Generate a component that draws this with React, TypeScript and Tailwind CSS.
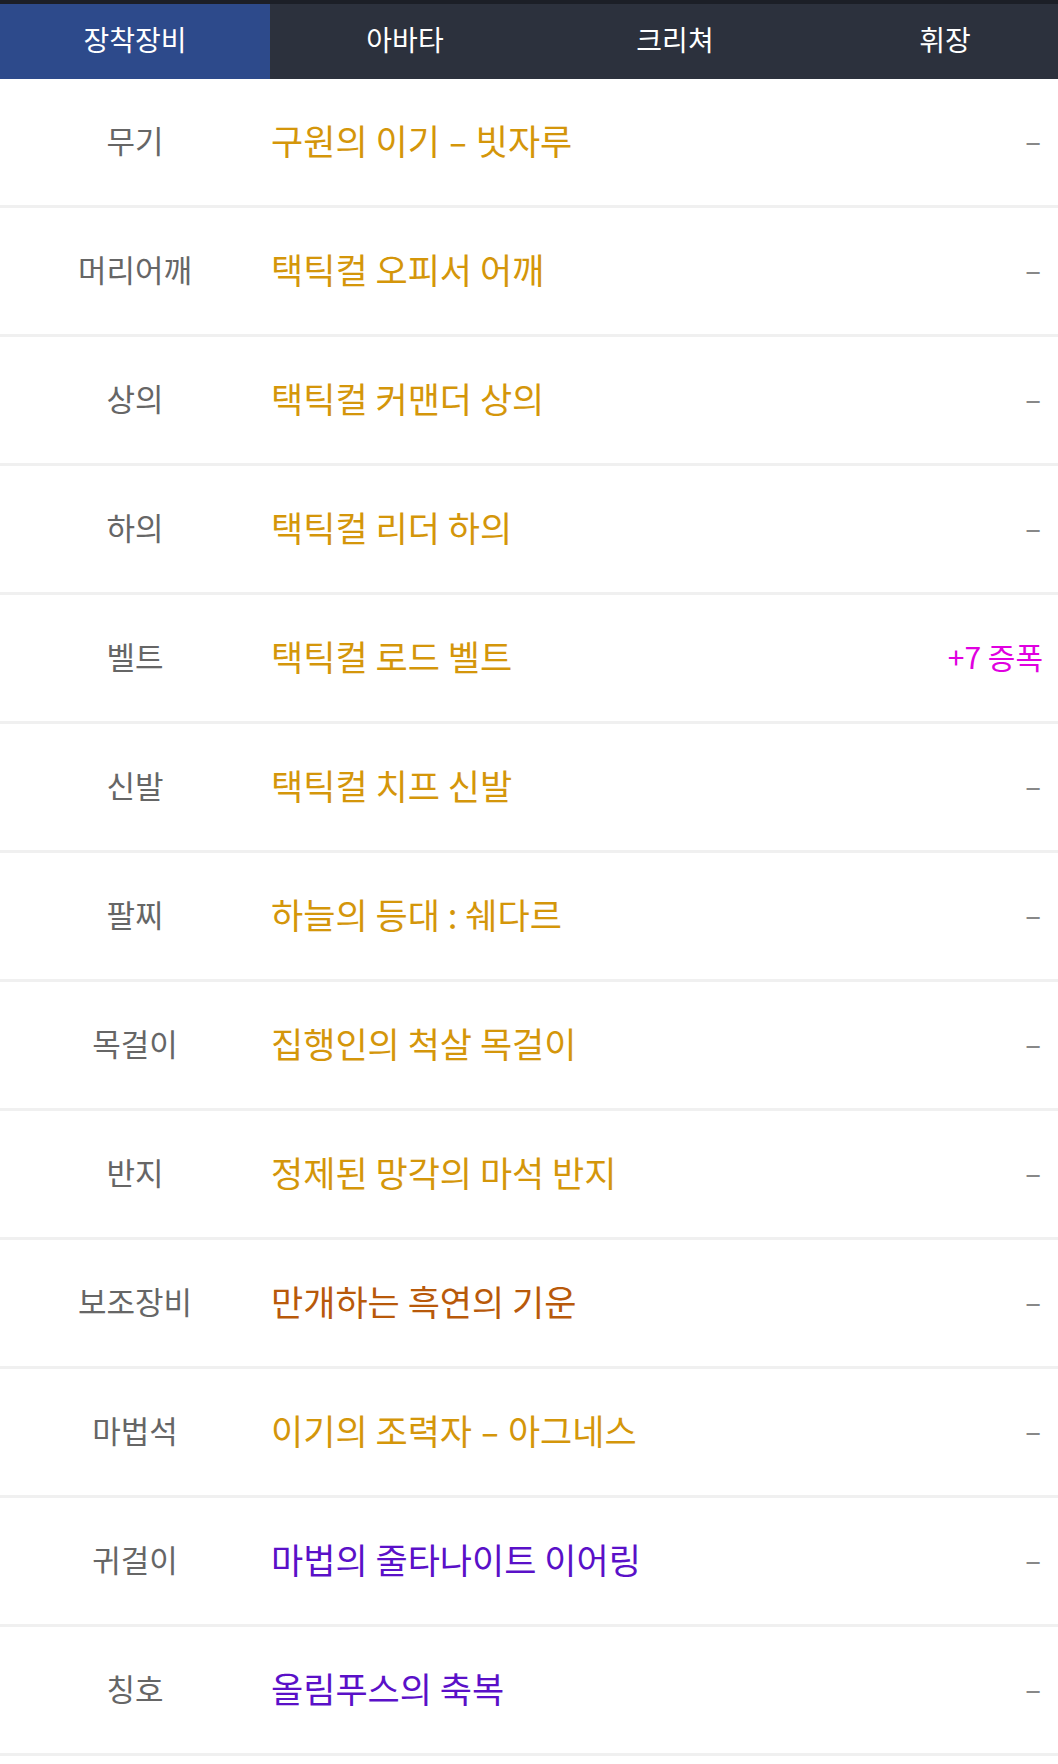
const tabs = ['장착장비', '아바타', '크리쳐', '휘장'];

type Item = { slot: string; name: string; color: string; extra?: string };

const items: Item[] = [
  { slot: '무기', name: '구원의 이기 - 빗자루', color: 'text-[#d4960a]' },
  { slot: '머리어깨', name: '택틱컬 오피서 어깨', color: 'text-[#d4960a]' },
  { slot: '상의', name: '택틱컬 커맨더 상의', color: 'text-[#d4960a]' },
  { slot: '하의', name: '택틱컬 리더 하의', color: 'text-[#d4960a]' },
  { slot: '벨트', name: '택틱컬 로드 벨트', color: 'text-[#d4960a]', extra: '+7 증폭' },
  { slot: '신발', name: '택틱컬 치프 신발', color: 'text-[#d4960a]' },
  { slot: '팔찌', name: '하늘의 등대 : 쉐다르', color: 'text-[#d4960a]' },
  { slot: '목걸이', name: '집행인의 척살 목걸이', color: 'text-[#d4960a]' },
  { slot: '반지', name: '정제된 망각의 마석 반지', color: 'text-[#d4960a]' },
  { slot: '보조장비', name: '만개하는 흑연의 기운', color: 'text-[#b8590a]' },
  { slot: '마법석', name: '이기의 조력자 - 아그네스', color: 'text-[#d4960a]' },
  { slot: '귀걸이', name: '마법의 줄타나이트 이어링', color: 'text-[#5a10c8]' },
  { slot: '칭호', name: '올림푸스의 축복', color: 'text-[#5a10c8]' },
];

// the hyphen in the item font is wider than the one we have
function Name({ text }: { text: string }) {
  const parts = text.split(' - ');
  if (parts.length < 2) return <>{text}</>;
  return (
    <>
      {parts[0]} <span className="mx-[4px] inline-block scale-x-[1.6]">-</span> {parts[1]}
    </>
  );
}

export default function App() {
  return (
    <div className="w-[1058px] min-h-[1764px] overflow-hidden bg-white font-['Noto_Sans_CJK_KR','Noto_Sans',sans-serif]">
      <div className="h-[4px] bg-[#1c1f27]" />
      <nav className="flex h-[75px] w-[1080px] bg-[#2c313d]">
        {tabs.map((t, i) => (
          <div
            key={t}
            className={`flex w-[270px] shrink-0 items-center justify-center pb-[6px] text-[28px] text-white ${
              i === 0 ? 'bg-[#2d4a8b]' : ''
            }`}
          >
            {t}
          </div>
        ))}
      </nav>

      <ul>
        {items.map((it) => (
          <li key={it.slot} className="flex h-[129px] items-center border-b-[3px] border-[#f0f0f0] pb-[3px]">
            <div className="w-[270px] shrink-0 text-center text-[31px] text-[#666666]">{it.slot}</div>
            <div className={`flex-1 pl-[1px] text-[35px] ${it.color}`}>
              <Name text={it.name} />
            </div>
            {it.extra ? (
              <div className="pr-[15px] text-[30px] text-[#e000e0]">{it.extra}</div>
            ) : (
              <div className="pr-[20px] pb-[3px] text-[30px] text-[#888888]">
                <span className="inline-block scale-x-[1.7]">-</span>
              </div>
            )}
          </li>
        ))}
      </ul>
    </div>
  );
}
